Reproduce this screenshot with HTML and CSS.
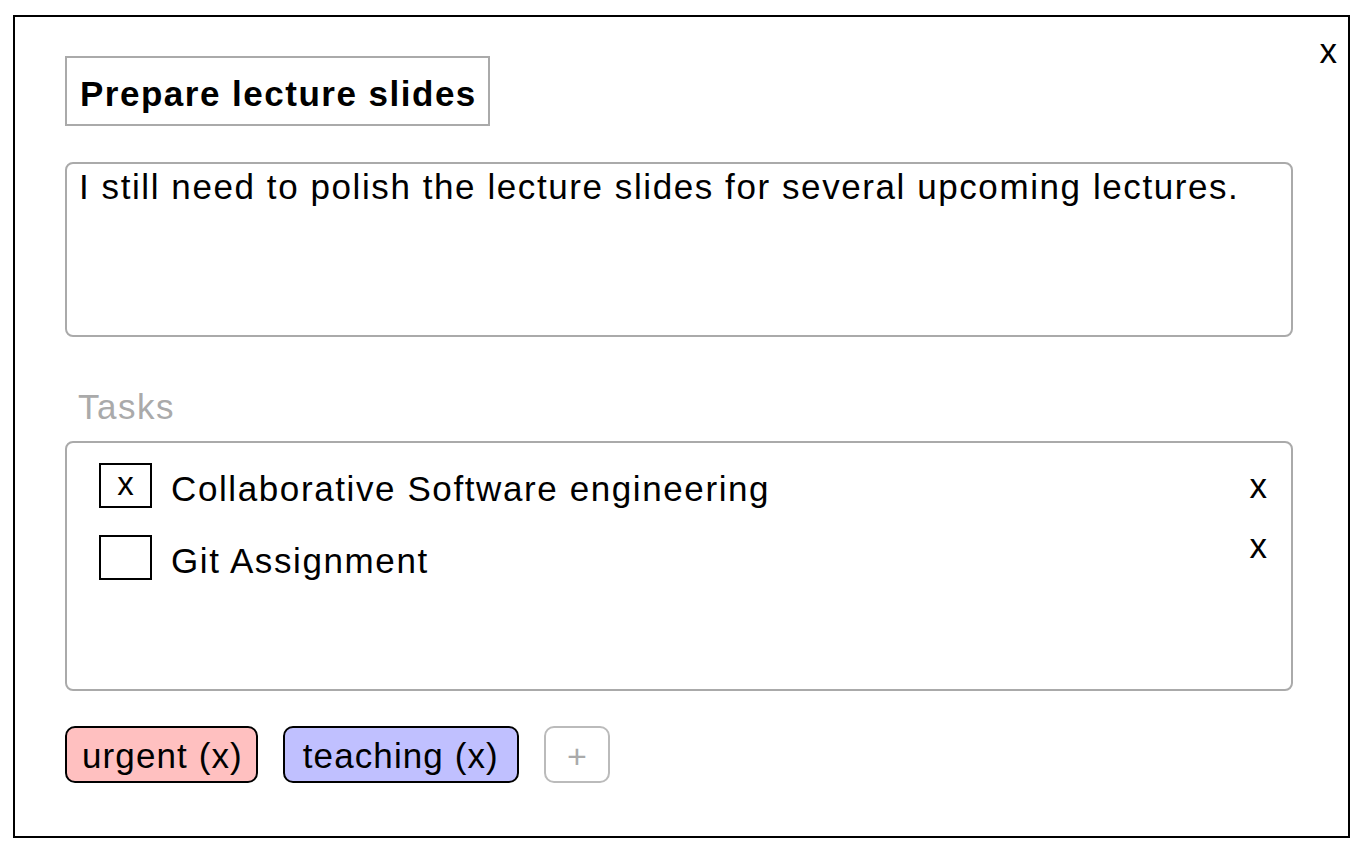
FILE: index.html
```html
<!DOCTYPE html>
<html>
<head>
<meta charset="utf-8">
<link rel="stylesheet" href="styles.css">
</head>
<body>
<div class="card">
  <span class="close">x</span>
  <div class="title">Prepare lecture slides</div>
  <div class="desc">I still need to polish the lecture slides for several upcoming lectures.</div>
  <div class="label">Tasks</div>
  <div class="tasks">
    <div class="task">
      <span class="check">x</span>
      <span class="task-name">Collaborative Software engineering</span>
      <span class="task-del">x</span>
    </div>
    <div class="task">
      <span class="check"></span>
      <span class="task-name">Git Assignment</span>
      <span class="task-del task-del-high">x</span>
    </div>
  </div>
  <div class="tags">
    <span class="tag tag-urgent">urgent (x)</span>
    <span class="tag tag-teaching">teaching (x)</span>
    <span class="tag-add">+</span>
  </div>
</div>
</body>
</html>
```
FILE: styles.css
```css
html, body {
  margin: 0;
  padding: 0;
  background: #fff;
}
body {
  padding: 15px 0 0 13px;
  font-family: "Liberation Sans", Arial, sans-serif;
  color: #000;
}
.card {
  position: relative;
  box-sizing: border-box;
  width: 1337px;
  height: 823px;
  border: 2px solid #000;
  padding: 39px 55px 0 50px;
  display: flex;
  flex-direction: column;
  align-items: flex-start;
}
.close {
  position: absolute;
  top: 14px;
  right: 11px;
  font-size: 35px;
  line-height: 40px;
}
.title {
  box-sizing: border-box;
  height: 70px;
  border: 2px solid #aaa;
  padding: 0 11px 0 13px;
  font-size: 35px;
  font-weight: bold;
  letter-spacing: 1.5px;
  line-height: 72px;
}
.desc {
  box-sizing: border-box;
  align-self: stretch;
  margin-top: 36px;
  height: 175px;
  border: 2px solid #aaa;
  border-radius: 8px;
  padding: 3px 12px;
  font-size: 35px;
  letter-spacing: 1.58px;
  line-height: 40px;
}
.label {
  margin-top: 50px;
  padding-left: 13px;
  font-size: 35px;
  letter-spacing: 1.5px;
  line-height: 40px;
  color: #aaa;
}
.tasks {
  box-sizing: border-box;
  align-self: stretch;
  margin-top: 14px;
  height: 250px;
  border: 2px solid #aaa;
  border-radius: 8px;
  padding: 20px 24px 0 32px;
  display: flex;
  flex-direction: column;
  gap: 27px;
}
.task {
  display: flex;
  align-items: center;
  height: 45px;
}
.check {
  box-sizing: border-box;
  width: 53px;
  height: 45px;
  border: 2px solid #000;
  font-size: 33px;
  line-height: 38px;
  text-align: center;
}
.task-name {
  flex: 1;
  margin-left: 19px;
  font-size: 35px;
  letter-spacing: 1.6px;
  line-height: 40px;
  padding-top: 6px;
}
.task-del {
  font-size: 35px;
  line-height: 40px;
}
.task-del-high {
  margin-bottom: 24px;
}
.tags {
  margin-top: 35px;
  display: flex;
  gap: 25px;
}
.tag {
  box-sizing: border-box;
  height: 57px;
  border: 2px solid #000;
  border-radius: 10px;
  padding: 0 13px 0 15px;
  font-size: 35px;
  letter-spacing: 1.1px;
  line-height: 55px;
}
.tag-urgent {
  background: #ffc0c0;
}
.tag-teaching {
  background: #c0c0ff;
  padding: 0 18px 0 18px;
}
.tag-add {
  box-sizing: border-box;
  width: 66px;
  height: 57px;
  border: 2px solid #bbb;
  border-radius: 10px;
  color: #aaa;
  font-size: 34px;
  font-weight: 300;
  line-height: 57px;
  text-align: center;
}
```
